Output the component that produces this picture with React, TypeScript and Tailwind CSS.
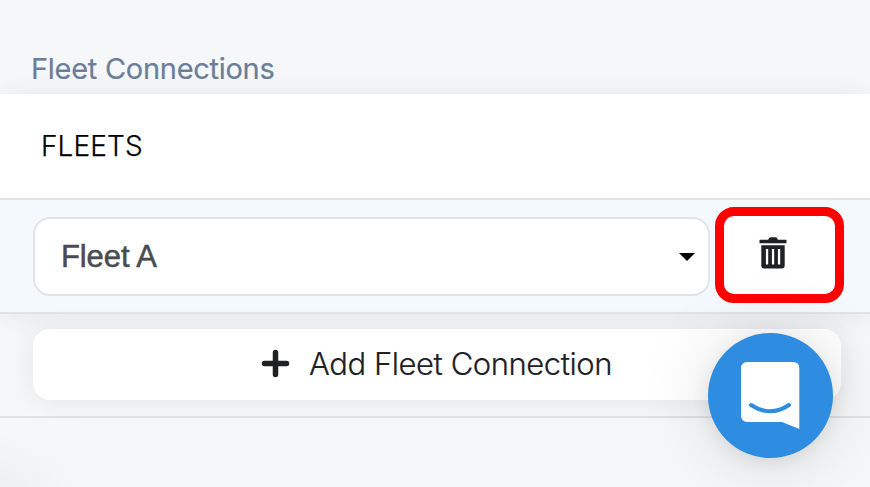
function TrashIcon() {
  return (
    <svg width="28" height="33" viewBox="0 0 28 33" className="mb-[4px] mr-[13px]">
      <path d="M1 2.700h8l1.300-1.700q.5-.7 1.300-.7h5q.8 0 1.300.7L19 2.700h8q.5 0 .5.600V6.300H.5V3.300q0-.6.5-.6Z" fill="#202124" />
      <path
        fillRule="evenodd"
        fill="#202124"
        d="M2.300 8.300h23.400V28.500q0 3-3 3H5.300q-3 0-3-3ZM6.900 12v15.500h2.300V12ZM12.900 12v15.500h2.300V12ZM18.900 12v15.500h2.300V12Z"
      />
    </svg>
  );
}

function ChatLauncher() {
  return (
    <button
      aria-label="Open chat"
      className="absolute left-[707.500px] top-[333px] h-[125px] w-[125px] rounded-full bg-[#2e8de0] shadow-[0_4px_18px_rgba(0,0,0,0.08),0_4px_75px_rgba(0,0,0,0.13)]"
    >
      <svg width="125" height="125" viewBox="0 0 125 125">
        <path d="M39.500 29H85q6.300 0 6.300 6.300V96L74 89H39.500Q33 89 33 82.500V35.500Q33 29 39.500 29Z" fill="#fff" />
        <path d="M43 72Q62 84.500 81 72" fill="none" stroke="#2e8de0" strokeWidth="4" strokeLinecap="round" />
      </svg>
    </button>
  );
}

export default function App() {
  return (
    <main className="relative flex h-[487px] w-[870px] flex-col overflow-hidden bg-[#f5f7f9] bg-[radial-gradient(circle_at_-10px_520px,#e9ebec_0,#f5f7f9_95px)] font-['Inter',sans-serif]">
      <h2 className="h-[94px] shrink-0 pl-[31px] pt-[48px] text-[29px] leading-[42px] tracking-[-0.28px] text-[#6b7f99] [-webkit-text-stroke:0.2px_#6b7f99]">
        Fleet Connections
      </h2>

      <section className="shrink-0 shadow-[0_2px_28px_rgba(0,0,0,0.07)]">
        <div className="flex h-[106px] items-center border-b-2 border-[#e2e3e4] bg-white pb-px pl-[41px] text-[28px] font-light tracking-[0.1px] text-black [-webkit-text-stroke:0.25px_#000]">
          FLEETS
        </div>
        <div className="flex h-[114px] items-start border-b-2 border-[#e0e3e4] bg-[#f3f9fc] pl-[33px] pt-[7px]">
          <div className="mt-[10px] flex h-[79px] w-[677px] items-center justify-between rounded-[17px] border-2 border-[#e3e4e5] bg-white pl-[26px] pr-[13px]">
            <span className="pt-px font-['Liberation_Sans',sans-serif] text-[31px] tracking-[-0.1px] text-[#484c50] [-webkit-text-stroke:0.5px_#484c50]">
              Fleet A
            </span>
            <span className="h-0 w-0 border-x-[8px] border-t-[8px] border-x-transparent border-t-black" />
          </div>
          <button
            aria-label="Delete fleet connection"
            className="ml-[5px] flex h-[96px] w-[129px] items-center justify-center rounded-[19px] border-[9px] border-[#ff0000] bg-white"
          >
            <TrashIcon />
          </button>
        </div>
      </section>

      <div className="h-[104px] shrink-0 border-b-2 border-[#e0e2e4] pl-[33px] pt-[15px]">
        <button className="flex h-[71px] w-[808px] items-center rounded-[17px] bg-white pl-[228px] shadow-[0_2px_28px_rgba(0,0,0,0.07)]">
          <svg width="29" height="29" viewBox="0 0 29 29" className="-mt-[2px]">
            <path d="M14.500 3.500v22M3.500 14.500h22" stroke="#202124" strokeWidth="5.500" strokeLinecap="round" />
          </svg>
          <span className="-mt-px ml-[19px] text-[31px] font-light tracking-[-0.45px] text-[#202124] [-webkit-text-stroke:0.2px_#202124]">
            Add Fleet Connection
          </span>
        </button>
      </div>
      <ChatLauncher />
    </main>
  );
}
